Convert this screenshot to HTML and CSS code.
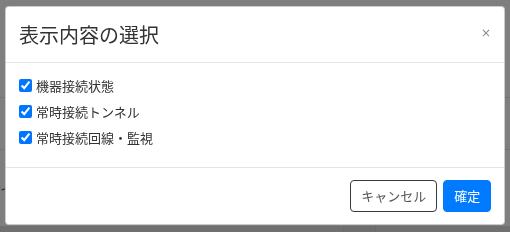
FILE: index.html
```html
<!DOCTYPE html>
<html lang="ja">
<head>
    <meta charset="UTF-8">
    <meta name="viewport" content="width=device-width, initial-scale=1.0">
    <title>表示内容の選択</title>
    <link rel="stylesheet" href="styles.css">
</head>
<body>
    <!-- 背景のページ（モーダルの下） -->
    <div class="page">
        <div class="page-head"></div>
        <div class="page-row"></div>
        <div class="page-row page-row-last"><span class="page-text">イ</span></div>
        <div class="page-foot">
            <div class="page-cell"></div>
            <div class="page-cell page-cell-narrow"></div>
            <div class="page-cell"></div>
        </div>
    </div>

    <div class="backdrop">
        <div class="modal-dialog">
            <div class="modal-content">
                <div class="modal-header">
                    <h5 class="modal-title">表示内容の選択</h5>
                    <button type="button" class="close">&times;</button>
                </div>
                <div class="modal-body">
                    <label class="check"><input type="checkbox" checked>機器接続状態</label>
                    <label class="check"><input type="checkbox" checked>常時接続トンネル</label>
                    <label class="check"><input type="checkbox" checked>常時接続回線・監視</label>
                </div>
                <div class="modal-footer">
                    <button type="button" class="btn btn-outline">キャンセル</button>
                    <button type="button" class="btn btn-primary">確定</button>
                </div>
            </div>
        </div>
    </div>
</body>
</html>
```

FILE: styles.css
```css
html {
    font-size: 13px;
}

body {
    margin: 0;
    padding: 0;
    font-family: "Noto Sans CJK JP", "Noto Sans", sans-serif;
    color: #333;
    background-color: #ffffff;
}

/* 背景ページ */
.page {
    height: 232px;
    overflow: hidden;
}

.page-head {
    height: 97px;
    border-bottom: 1px solid #e6e6e6;
}

.page-row {
    height: 51px;
    border-bottom: 1px solid #e6e6e6;
}

.page-row-last {
    height: 76px;
    border-bottom: none;
    display: flex;
    align-items: center;
}

.page-text {
    margin-left: 0;
    color: #0b5b8f;
    font-size: 14px;
}

.page-foot {
    display: flex;
    height: 7px;
    background-color: #e0e0e0;
}

.page-cell {
    width: 343px;
    border-right: 1px solid #d2d2d2;
}

.page-cell-narrow {
    width: 31px;
    background-color: #dcdcdc;
}

.page-cell:last-child {
    flex: 1;
    border-right: none;
}

/* モーダル */
.backdrop {
    position: fixed;
    top: 0;
    left: 0;
    right: 0;
    bottom: 0;
    background-color: rgba(0, 0, 0, 0.5);
}

.modal-dialog {
    margin: 6px 5px;
}

.modal-content {
    background-color: #ffffff;
    border: 1px solid rgba(0, 0, 0, 0.2);
    border-radius: 4px;
}

.modal-header {
    display: flex;
    justify-content: space-between;
    align-items: center;
    padding: 13px;
    border-bottom: 1px solid #e3e3e8;
}

.modal-title {
    margin: 0;
    font-size: 20px;
    font-weight: 400;
    line-height: 29px;
    color: #333;
}

.close {
    padding: 0;
    margin: 0 0 3px 0;
    border: none;
    background: none;
    font-family: "DejaVu Sans", sans-serif;
    font-size: 12px;
    line-height: 1;
    color: #8a8a8a;
}

.modal-body {
    padding: 13px;
}

.check {
    display: flex;
    align-items: center;
    margin-bottom: 6.5px;
    font-size: 13px;
    line-height: 19.5px;
    color: #333;
}

.check input {
    width: 13px;
    height: 13px;
    margin: 0 4px 0 0;
}

.modal-footer {
    display: flex;
    justify-content: flex-end;
    align-items: center;
    padding: 9px 9.75px;
    border-top: 1px solid #e3e3e3;
}

.btn {
    margin: 3.25px;
    padding: 4.875px 9.75px;
    font-family: "Noto Sans CJK JP", sans-serif;
    font-size: 13px;
    line-height: 19.5px;
    border-radius: 4px;
    border: 1px solid transparent;
}

.btn-outline {
    background-color: #ffffff;
    border-color: #343a40;
    color: #555;
}

.btn-primary {
    background-color: #007bff;
    border-color: #007bff;
    color: #ffffff;
}
```
